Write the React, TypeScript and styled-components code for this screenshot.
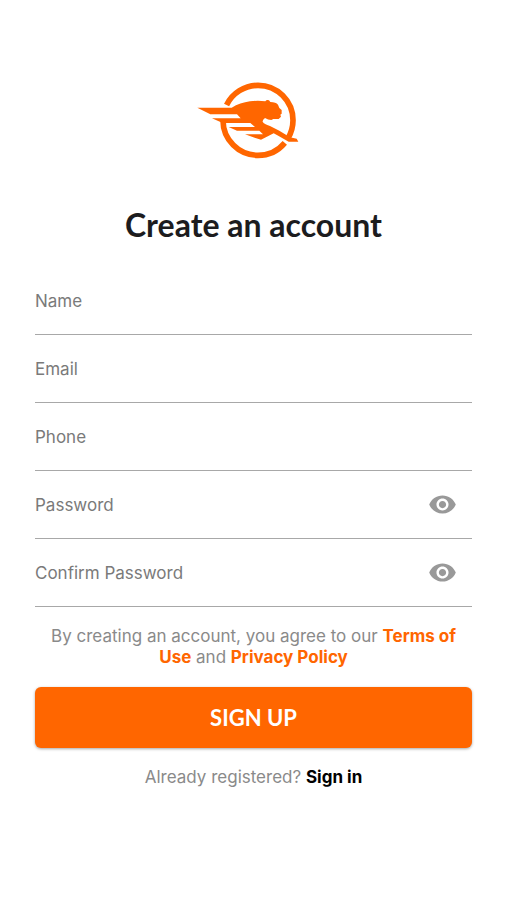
import React, { useState } from "react";
import styled, { createGlobalStyle } from "styled-components";
import { MdVisibility } from "react-icons/md";

const ORANGE = "#ff6600";

const GlobalStyle = createGlobalStyle`
  *, *::before, *::after { box-sizing: border-box; }
  body {
    margin: 0;
    background: #fff;
    font-family: Inter, "Liberation Sans", sans-serif;
  }
`;

const Page = styled.main`
  display: flex;
  flex-direction: column;
  align-items: center;
  min-height: 100vh;
  padding: 80px 35px 32px;
`;

const Logo = styled.svg`
  display: block;
  width: 120px;
  height: 80px;
`;

const Title = styled.h1`
  margin: 45px 0 22px;
  color: #1c1c1e;
  font-family: Lato, sans-serif;
  font-size: 32px;
  font-weight: 700;
  line-height: 40px;
  text-align: center;
`;

const Form = styled.form`
  width: 100%;
`;

const FieldRow = styled.div`
  display: flex;
  align-items: center;
  height: 68px;
  border-bottom: 1px solid #a8a8a8;
`;

const FieldLabel = styled.label`
  padding-right: 12px;
  color: #7a7a7a;
  font-size: 17px;
  line-height: 24px;
`;

const FieldInput = styled.input`
  flex: 1;
  min-width: 0;
  height: 100%;
  padding: 0;
  border: 0;
  outline: 0;
  background: transparent;
  color: #1c1c1e;
  font: inherit;
  font-size: 17px;
`;

const RevealButton = styled.button`
  display: flex;
  margin-right: 15px;
  padding: 0;
  border: 0;
  background: none;
  color: #999;
  font-size: 29px;
  cursor: pointer;
`;

const Note = styled.p`
  margin: 19px 0;
  color: #8a8a8a;
  font-size: 17px;
  line-height: 21px;
  text-align: center;
`;

const TextLink = styled.a<{ $dark?: boolean }>`
  color: ${(p) => (p.$dark ? "#000" : ORANGE)};
  font-weight: 700;
  text-decoration: none;
`;

const SubmitButton = styled.button`
  display: block;
  width: 100%;
  height: 61px;
  padding: 0;
  border: 0;
  border-radius: 6px;
  background: ${ORANGE};
  box-shadow: 0 1px 3px rgba(0, 0, 0, 0.35);
  color: #fff;
  font-family: Lato, sans-serif;
  font-size: 22px;
  font-weight: 700;
  cursor: pointer;
`;

type FieldProps = { id: string; label: string; type: string };

function Field({ id, label, type }: FieldProps) {
  const [shown, setShown] = useState(false);
  const secret = type === "password";
  return (
    <FieldRow>
      <FieldLabel htmlFor={id}>{label}</FieldLabel>
      <FieldInput id={id} name={id} type={secret && shown ? "text" : type} />
      {secret && (
        <RevealButton
          type="button"
          aria-label={`Show ${label.toLowerCase()}`}
          aria-pressed={shown}
          onClick={() => setShown(!shown)}
        >
          <MdVisibility />
        </RevealButton>
      )}
    </FieldRow>
  );
}

const fields: FieldProps[] = [
  { id: "name", label: "Name", type: "text" },
  { id: "email", label: "Email", type: "email" },
  { id: "phone", label: "Phone", type: "tel" },
  { id: "password", label: "Password", type: "password" },
  { id: "confirm-password", label: "Confirm Password", type: "password" },
];

export default function App() {
  return (
    <>
      <GlobalStyle />
      <Page>
        <Logo viewBox="20 18 360 240" role="img" aria-label="Leaping panther">
          <circle
            cx="212"
            cy="139"
            r="105"
            pathLength="360"
            fill="none"
            stroke={ORANGE}
            strokeWidth="17"
            strokeDasharray="31 9 140 26 154 0"
          />
          <path
            fill={ORANGE}
            d="M30 101 H133 Q158 86 188 82 Q212 79 234 82 Q238 76 245 79 L249 84 Q266 85 272 92 L276 102 L283 108 L283 119 L279 122 L281 128 L274 135 L258 135 L252 138 Q242 138 233 132 Q225 138 226 143 Q230 150 248 156 L276 170 L308 190 L328 194 L333 203 H304 L270 184 L259 178 L243 186 L221 197 L202 191 L173 181 H227 L216 170 H149 L124 159 H203 L189 147 H106 L74 133 H160 L149 121 H69 Z"
          />
        </Logo>
        <Title>Create an account</Title>
        <Form onSubmit={(e) => e.preventDefault()}>
          {fields.map((f) => (
            <Field key={f.id} {...f} />
          ))}
          <Note>
            By creating an account, you agree to our{" "}
            <TextLink href="#terms">Terms of Use</TextLink> and{" "}
            <TextLink href="#privacy">Privacy Policy</TextLink>
          </Note>
          <SubmitButton type="submit">SIGN UP</SubmitButton>
        </Form>
        <Note>
          Already registered?{" "}
          <TextLink href="#signin" $dark>
            Sign in
          </TextLink>
        </Note>
      </Page>
    </>
  );
}
